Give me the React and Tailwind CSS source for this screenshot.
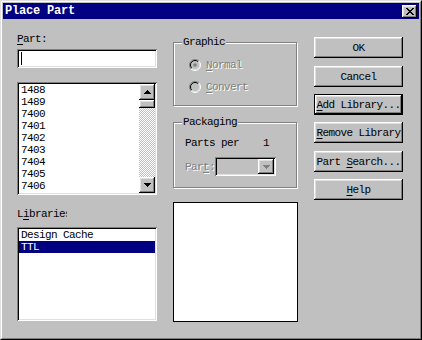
const RAISED =
  "shadow-[inset_-1px_-1px_0_#000,inset_1px_1px_0_#fff,inset_-2px_-2px_0_#808080,inset_2px_2px_0_#dfdfdf]";
const SUNKEN =
  "shadow-[inset_1px_1px_0_#808080,inset_-1px_-1px_0_#fff,inset_2px_2px_0_#000,inset_-2px_-2px_0_#dfdfdf]";
const ETCHED =
  "border border-[#808080] shadow-[inset_1px_1px_0_#fff,1px_1px_0_#fff]";
const DISABLED = "text-[#808080] [text-shadow:1px_1px_0_#fff]";

const PARTS = ["1488", "1489", "7400", "7401", "7402", "7403", "7404", "7405", "7406"];

function Arrow({ down, color = "#000" }) {
  return (
    <svg width="7" height="4" viewBox="0 0 7 4" shapeRendering="crispEdges">
      <path d={down ? "M0 0h7v1H0zM1 1h5v1H1zM2 2h3v1H2zM3 3h1v1H3z" : "M3 0h1v1H3zM2 1h3v1H2zM1 2h5v1H1zM0 3h7v1H0z"} fill={color} />
    </svg>
  );
}

function Radio({ checked }) {
  return (
    <svg width="12" height="12" viewBox="0 0 12 12" className="shrink-0">
      <circle cx="6" cy="6" r="4.5" fill="#c0c0c0" />
      <path d="M2.1 9.9A5.5 5.5 0 0 1 9.9 2.1" fill="none" stroke="#808080" strokeWidth="1" />
      <path d="M9.9 2.1A5.5 5.5 0 0 1 2.1 9.9" fill="none" stroke="#fff" strokeWidth="1" />
      <path d="M2.8 9.2A4.5 4.5 0 0 1 9.2 2.8" fill="none" stroke="#000" strokeWidth="1" />
      <path d="M9.2 2.8A4.5 4.5 0 0 1 2.8 9.2" fill="none" stroke="#dfdfdf" strokeWidth="1" />
      {checked && <circle cx="6" cy="6" r="1.8" fill="#808080" />}
    </svg>
  );
}

function Button({ children, focused }) {
  return (
    <div
      className={`flex h-[21px] w-[89px] items-center justify-center whitespace-nowrap ${RAISED} ${
        focused ? "border border-black" : ""
      }`}
    >
      {children}
    </div>
  );
}

function Key({ children }) {
  return <span className="underline decoration-1 underline-offset-[2px]">{children}</span>;
}

export default function App() {
  return (
    <div className="h-[340px] w-[422px] border border-t-[#dfdfdf] border-l-[#dfdfdf] border-r-black border-b-black bg-[#c0c0c0] font-['Liberation_Mono',monospace] text-[11px] leading-[12px] tracking-[-0.6px] text-black">
      <div className="h-full border border-t-white border-l-white border-r-[#808080] border-b-[#808080] p-[1px]">
        {/* title bar */}
        <div className="flex h-[16px] items-center justify-between bg-[#000080] pl-[2px] pr-[2px]">
          <span className="text-[12px] font-bold tracking-[-0.2px] text-white">Place Part</span>
          <div className={`flex h-[13px] w-[15px] items-center justify-center bg-[#c0c0c0] ${RAISED}`}>
            <svg width="8" height="7" viewBox="0 0 8 7" shapeRendering="crispEdges">
              <path d="M0 0h2v1H0zM1 1h2v1H1zM2 2h2v1H2zM3 3h2v1H3zM2 4h2v1H2zM1 5h2v1H1zM0 6h2v1H0zM6 0h2v1H6zM5 1h2v1H5zM4 2h2v1H4zM4 4h2v1H4zM5 5h2v1H5zM6 6h2v1H6z" fill="#000" />
            </svg>
          </div>
        </div>

        <div className="flex pl-[14px]">
          {/* left column */}
          <div className="flex w-[140px] flex-col">
            <div className="mt-[14px] h-[12px]">
              <Key>P</Key>art:
            </div>
            <div className={`mt-[4px] h-[19px] bg-white p-[2px] ${SUNKEN}`}>
              <div className="ml-[2px] mt-[1px] h-[13px] w-[1px] bg-black" />
            </div>
            <div className={`mt-[14px] flex h-[113px] bg-white p-[2px] ${SUNKEN}`}>
              <div className="flex-1 pl-[2px]">
                {PARTS.map((p) => (
                  <div key={p} className="h-[12px]">
                    {p}
                  </div>
                ))}
              </div>
              <div className="flex w-[16px] flex-col bg-[repeating-conic-gradient(#fff_0_25%,#c0c0c0_0_50%)] [background-size:2px_2px]">
                <div className={`flex h-[16px] items-center justify-center bg-[#c0c0c0] ${RAISED}`}>
                  <Arrow />
                </div>
                <div className={`h-[8px] bg-[#c0c0c0] ${RAISED}`} />
                <div className="flex-1" />
                <div className={`flex h-[16px] items-center justify-center bg-[#c0c0c0] ${RAISED}`}>
                  <Arrow down />
                </div>
              </div>
            </div>
            <div className="mt-[13px] h-[12px] w-[50px] overflow-hidden whitespace-nowrap">
              L<Key>i</Key>braries
            </div>
            <div className={`mt-[7px] h-[94px] bg-white p-[2px] ${SUNKEN}`}>
              <div className="h-[12px] pl-[2px]">Design Cache</div>
              <div className="h-[12px] bg-[#000080] pl-[2px] text-white">TTL</div>
            </div>
          </div>

          {/* middle column */}
          <div className="ml-[16px] flex w-[125px] flex-col">
            <div className={`relative mt-[23px] h-[64px] w-[124px] pl-[15px] pt-[16px] ${ETCHED}`}>
              <span className="absolute -top-[7px] left-[8px] bg-[#c0c0c0] px-[1px]">Graphic</span>
              <div className="flex h-[12px] items-center gap-[5px]">
                <Radio checked />
                <span className={DISABLED}>
                  <Key>N</Key>ormal
                </span>
              </div>
              <div className="mt-[10px] flex h-[12px] items-center gap-[5px]">
                <Radio />
                <span className={DISABLED}>
                  <Key>C</Key>onvert
                </span>
              </div>
            </div>

            <div className={`relative mt-[16px] h-[66px] w-[124px] pl-[11px] pt-[14px] ${ETCHED}`}>
              <span className="absolute -top-[7px] left-[8px] bg-[#c0c0c0] px-[1px]">Packaging</span>
              <div className="flex h-[12px]">
                <span className="w-[78px]">Parts per</span>
                <span>1</span>
              </div>
              <div className="mt-[8px] flex items-center">
                <span className={`w-[30px] ${DISABLED}`}>
                  Par<Key>t</Key>:
                </span>
                <div className={`flex h-[19px] w-[61px] justify-end bg-[#c0c0c0] p-[2px] ${SUNKEN}`}>
                  <div className={`flex h-[15px] w-[16px] items-center justify-center ${RAISED}`}>
                    <Arrow down color="#808080" />
                  </div>
                </div>
              </div>
            </div>

            <div className="mt-[14px] h-[120px] w-[125px] border border-black bg-white" />
          </div>

          {/* right column */}
          <div className="ml-[16px] flex w-[89px] flex-col">
            <div className="mt-[18px]">
              <Button>OK</Button>
            </div>
            <div className="mt-[8px]">
              <Button>Cancel</Button>
            </div>
            <div className="mt-[7px]">
              <Button focused>
                <span>
                  <Key>A</Key>dd Library...
                </span>
              </Button>
            </div>
            <div className="mt-[7px]">
              <Button>
                <span>
                  <Key>R</Key>emove Library
                </span>
              </Button>
            </div>
            <div className="mt-[8px]">
              <Button>
                <span>
                  Part <Key>S</Key>earch...
                </span>
              </Button>
            </div>
            <div className="mt-[7px]">
              <Button>
                <span>
                  <Key>H</Key>elp
                </span>
              </Button>
            </div>
          </div>
        </div>
      </div>
    </div>
  );
}
